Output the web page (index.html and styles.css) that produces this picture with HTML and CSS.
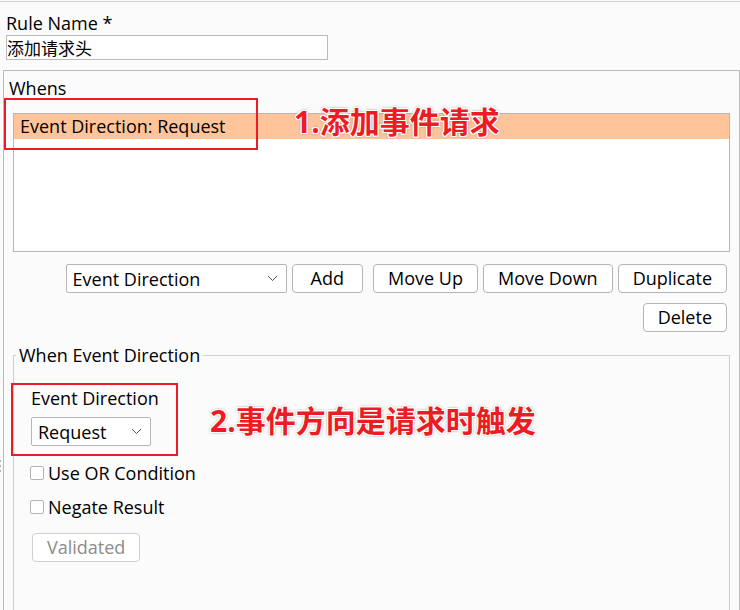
FILE: index.html
```html
<!DOCTYPE html>
<html lang="en">
<head>
<meta charset="utf-8">
<title>Rule editor</title>
<link rel="stylesheet" href="styles.css">
</head>
<body>
<main class="editor">
  <div class="rule-name">
    <label for="rule-name">Rule Name *</label>
    <input id="rule-name" class="text-input" type="text" value="添加请求头">
  </div>

  <section class="panel">
    <h2 class="panel-title">Whens</h2>
    <ul class="when-list">
      <li class="when-item selected">Event Direction: Request</li>
    </ul>

    <div class="toolbar">
      <div class="picker">
        <span class="select-wrap wide">
          <select class="select" aria-label="When type"><option>Event Direction</option></select>
          <svg class="chevron" viewBox="0 0 11 7"><path d="M1 1l4.500 4.500L10 1"/></svg>
        </span>
        <button class="button" type="button">Add</button>
      </div>
      <button class="button" type="button">Move Up</button>
      <button class="button" type="button">Move Down</button>
      <button class="button" type="button">Duplicate</button>
      <button class="button" type="button">Delete</button>
    </div>

    <fieldset class="details">
      <legend>When Event Direction</legend>
      <div class="field">
        <label for="direction">Event Direction</label>
        <span class="select-wrap narrow">
          <select id="direction" class="select"><option>Request</option></select>
          <svg class="chevron" viewBox="0 0 11 7"><path d="M1 1l4.500 4.500L10 1"/></svg>
        </span>
      </div>
      <label class="check"><input type="checkbox">Use OR Condition</label>
      <label class="check"><input type="checkbox">Negate Result</label>
      <button class="button validated" type="button" disabled>Validated</button>
    </fieldset>
  </section>

  <div class="grip"></div>
  <div class="mark mark-list"></div>
  <div class="note note-list">1.添加事件请求</div>
  <div class="mark mark-direction"></div>
  <div class="note note-direction">2.事件方向是请求时触发</div>
</main>
</body>
</html>
```
FILE: styles.css
```css
* {
  box-sizing: border-box;
}

body {
  margin: 0;
  background: #fbfbfb;
  color: #000;
  font: 18px/24px "Open Sans", "Noto Sans CJK SC", sans-serif;
}

.editor {
  position: relative;
  display: flex;
  flex-direction: column;
  height: 100vh;
  overflow: hidden;
  border-top: 1px solid #fbfbfb;
  box-shadow: inset 0 1px #cfcfcf;
}

.rule-name {
  display: flex;
  flex-direction: column;
  align-items: flex-start;
  padding: 10px 6px;
}

.text-input {
  width: 322px;
  max-width: 100%;
  height: 25px;
  padding: 0;
  border: 1px solid #bababa;
  background: #fff;
  color: inherit;
  font: 17px/23px "Noto Sans CJK SC", sans-serif;
}

.panel {
  display: flex;
  flex: 1;
  flex-direction: column;
  margin-left: 3px;
  padding: 5px 9px 0;
  border: 1px solid #bababa;
  border-bottom: 0;
}

.panel-title {
  margin: 0 0 13px -4px;
  font-size: 18px;
  font-weight: 400;
}

.when-list {
  height: 139px;
  margin: 0;
  padding: 0;
  border: 1px solid #b8b5b8;
  background: #fff;
  list-style: none;
}

.when-item {
  height: 25px;
  padding-left: 6px;
  line-height: 25px;
}

.selected {
  background: #ffc499;
}

.toolbar {
  display: flex;
  flex-wrap: wrap;
  justify-content: flex-end;
  gap: 10px 5px;
  padding: 12px 3px 11px;
}

.picker {
  display: flex;
  gap: 5px;
  margin-right: 5px;
}

.button,
.select {
  height: 29px;
  border: 1px solid #b8b3b8;
  border-radius: 4px;
  background: #fff;
  color: inherit;
  font: inherit;
}

.button {
  padding: 0 14px;
  line-height: 27px;
}

.picker .button {
  padding: 0 18px;
}

.select-wrap {
  position: relative;
  display: block;
}

.select {
  display: block;
  width: 100%;
  padding: 0 6px;
  border-radius: 2px;
  appearance: none;
}

.wide {
  width: 221px;
}

.narrow {
  width: 120px;
}

.chevron {
  position: absolute;
  top: 11px;
  right: 9px;
  width: 11px;
  height: 7px;
  fill: none;
  stroke: #505050;
  pointer-events: none;
}

.details {
  display: flex;
  flex: 1;
  flex-direction: column;
  align-items: flex-start;
  min-width: 0;
  margin: 0;
  padding: 19px 16px 0;
  border: 1px solid #cfcfcf;
  border-bottom: 0;
}

.details legend {
  margin-left: -14px;
  padding: 0 3px;
}

.field {
  display: flex;
  flex-direction: column;
  gap: 7px;
  margin: 0 1px 15px;
}

.check {
  display: flex;
  align-items: center;
  gap: 4px;
  margin-bottom: 10px;
}

.check input {
  width: 14px;
  height: 14px;
  margin: 0;
  border: 1px solid #b3b3b3;
  border-radius: 2px;
  background: #fff;
  appearance: none;
}

.check input:checked {
  background: #606060;
}

.validated {
  margin: 4px 2px;
  border-color: #cfcfcf;
  color: #8c8c8c;
}

.grip {
  position: absolute;
  top: 459px;
  left: 0;
  width: 1px;
  height: 12px;
  background: repeating-linear-gradient(#b0b0b0 0 2px, transparent 2px 5px);
}

.mark {
  position: absolute;
  border: 2px solid #ed1c24;
  pointer-events: none;
}

.mark-list {
  top: 97px;
  left: 4px;
  width: 254px;
  height: 52px;
}

.mark-direction {
  top: 382px;
  left: 11px;
  width: 167px;
  height: 73px;
}

.note {
  position: absolute;
  color: #ed1c24;
  font: 700 30px/40px "Open Sans", "Noto Sans CJK SC", sans-serif;
  text-shadow: 1px 0 #fff, -1px 0 #fff, 0 1px #fff, 0 -1px #fff,
    1px 1px #fff, -1px -1px #fff, 1px -1px #fff, -1px 1px #fff,
    0 0 3px #777, 0 0 3px #999;
  white-space: nowrap;
  pointer-events: none;
}

.note-list {
  top: 101px;
  left: 294px;
}

.note-direction {
  top: 400px;
  left: 210px;
}
```
